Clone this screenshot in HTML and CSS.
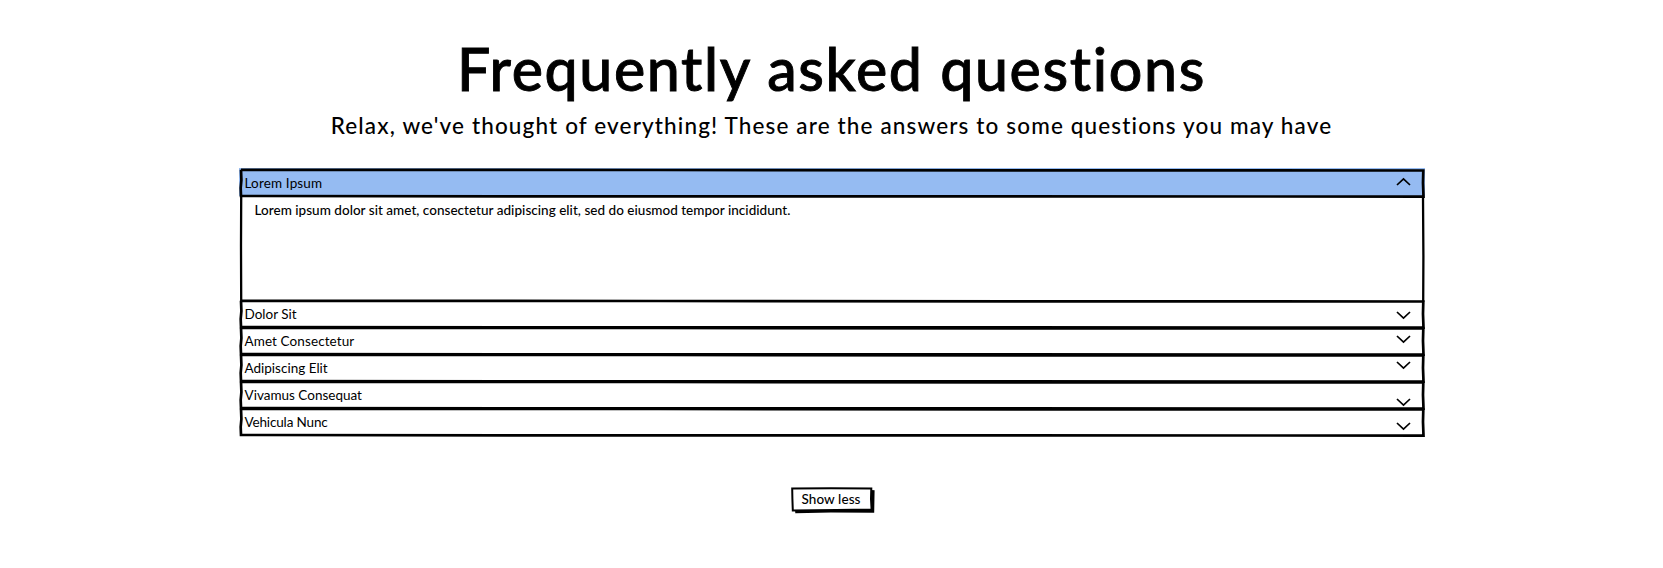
FILE: index.html
```html
<!DOCTYPE html>
<html lang="en">
<head>
<meta charset="utf-8">
<title>Frequently asked questions</title>
<link rel="stylesheet" href="styles.css">
</head>
<body>
<svg class="defs" width="0" height="0">
  <symbol id="frame" viewBox="0 0 1186 30"><path d="M2 1.8L420 2L800 2.4L1184.3 2.5L1184 15L1184.5 28.6L700 28.3L300 28.4L2 28L1.7 20L2.4 12L2 1.8"/></symbol>
  <symbol id="chevron" viewBox="0 0 15 9"><path d="M1 1L7.5 7.2L14 1"/></symbol>
</svg>
<main class="faq">
  <h1 class="title"><span>Frequently asked questions</span></h1>
  <p class="subtitle"><span>Relax, we've thought of everything! These are the answers to some questions you may have</span></p>
  <section class="accordion">
    <div class="row open"><svg class="frame"><use href="#frame"/></svg><span class="l1">Lorem Ipsum</span><svg class="chev up"><use href="#chevron"/></svg></div>
    <div class="panel"><svg class="sides" viewBox="0 0 1186 103"><path d="M2.2 0L2 50L2.2 106M1184 0L1184.4 60L1184.2 106"/></svg><p>Lorem ipsum dolor sit amet, consectetur adipiscing elit, sed do eiusmod tempor incididunt.</p></div>
    <div class="row"><svg class="frame"><use href="#frame"/></svg><span class="l2">Dolor Sit</span><svg class="chev c2"><use href="#chevron"/></svg></div>
    <div class="row"><svg class="frame"><use href="#frame"/></svg><span class="l3">Amet Consectetur</span><svg class="chev c3"><use href="#chevron"/></svg></div>
    <div class="row"><svg class="frame"><use href="#frame"/></svg><span class="l4">Adipiscing Elit</span><svg class="chev c4"><use href="#chevron"/></svg></div>
    <div class="row"><svg class="frame"><use href="#frame"/></svg><span class="l5">Vivamus Consequat</span><svg class="chev c5"><use href="#chevron"/></svg></div>
    <div class="row"><svg class="frame"><use href="#frame"/></svg><span class="l6">Vehicula Nunc</span><svg class="chev c6"><use href="#chevron"/></svg></div>
  </section>
  <button class="less"><svg class="sketch" viewBox="0 0 84 27"><path class="shadow" d="M4 22H80V3L83.6 3.2L83.2 25.8L40 25.4L4.3 26.2Z"/><path class="face" d="M1.2 1.6L40 1.2L80.3 1.4L80 12L80.6 22.6L45 23L1.8 23.4L1.4 12Z"/></svg><span>Show less</span></button>
</main>
</body>
</html>
```
FILE: styles.css
```css
* { box-sizing: border-box; }
body { margin: 0; background: #fff; color: #000; font-family: Lato, "Open Sans", sans-serif; }
.defs { display: block; }
.faq { height: 568px; padding-top: 32px; display: flex; flex-direction: column; align-items: center; }
.title, .subtitle, .panel p { margin: 0; font-weight: 500; white-space: nowrap; }
.title { height: 74px; line-height: 74px; font-size: 59px; letter-spacing: 1.65px; -webkit-text-stroke: 0.9px #000; }
.subtitle { height: 40px; line-height: 39px; font-size: 22.5px; letter-spacing: 1.14px; }
.accordion { width: 1186px; margin-top: 22px; font-size: 13.5px; }
.row { position: relative; display: flex; align-items: flex-start; justify-content: space-between; height: 27px; padding: 0 14px 0 6px; line-height: 31px; }
.row span { position: relative; white-space: nowrap; }
.l1 { letter-spacing: 0.15px; }
.l3 { letter-spacing: 0.1px; }
.l6 { letter-spacing: -0.15px; }
.open { height: 28px; background: #95bbf2; }
.frame { position: absolute; left: 0; top: 0; width: 1186px; height: 30px; fill: none; stroke: #000; stroke-width: 2.7px; overflow: visible; }
.chev { position: relative; width: 15px; height: 9px; margin-top: 12px; fill: none; stroke: #000; stroke-width: 1.7px; }
.up { transform: scaleY(-1); margin-top: 9px; }
.c3 { margin-top: 9px; }
.c4 { margin-top: 8px; }
.c5 { margin-top: 18px; }
.c6 { margin-top: 15px; }
.panel { position: relative; height: 103px; padding: 2px 16px; line-height: 24px; letter-spacing: 0.03px; }
.sides { position: absolute; left: 0; top: 0; width: 1186px; height: 103px; fill: none; stroke: #000; stroke-width: 2.3px; overflow: visible; }
.less { position: relative; width: 84px; height: 27px; margin: 53px 0 0 2px; padding: 0 3px 3px 0; border: 0; background: none; font: 500 13.5px Lato, sans-serif; color: #000; }
.sketch { position: absolute; left: 0; top: 0; width: 84px; height: 27px; }
.face { fill: #fff; stroke: #000; stroke-width: 2px; }
.less span { position: relative; letter-spacing: 0.1px; }
```
